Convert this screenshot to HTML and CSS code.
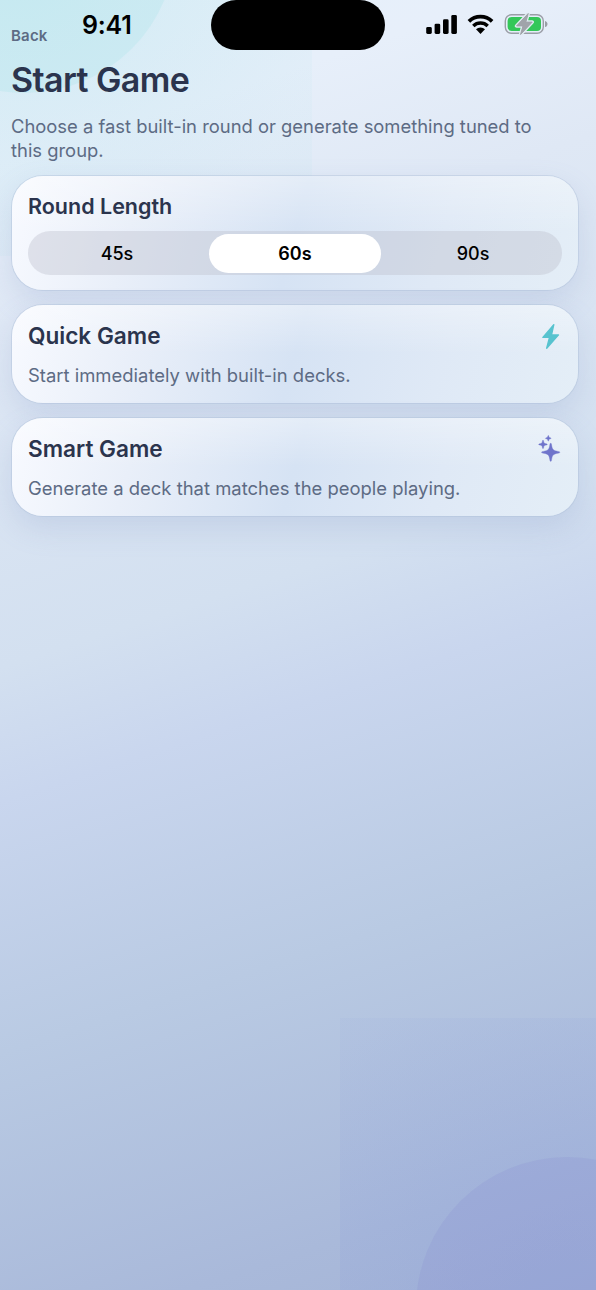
FILE: index.html
```html
<!DOCTYPE html>
<html lang="en">
<head>
    <meta charset="UTF-8">
    <meta name="viewport" content="width=device-width, initial-scale=1.0">
    <title>Start Game</title>
    <link rel="stylesheet" href="styles.css">
</head>
<body>
    <div class="screen">
        <!-- background shapes -->
        <div class="glow glow_top"></div>
        <div class="glow glow_bottom"></div>
        <div class="orb orb_top"></div>
        <div class="orb orb_bottom"></div>

        <!-- status bar, floats over the page header -->
        <div class="status_bar">
            <span class="clock">9:41</span>
            <div class="island"></div>
            <div class="status_icons">
                <svg class="signal" width="31" height="20" viewBox="0 0 31 20">
                    <rect x="0.2" y="13" width="5.6" height="7" rx="1.4"/>
                    <rect x="8.6" y="9.7" width="5.6" height="10.3" rx="1.4"/>
                    <rect x="17" y="5.3" width="5.6" height="14.7" rx="1.4"/>
                    <rect x="25.3" y="1" width="5.6" height="19" rx="1.4"/>
                </svg>
                <svg class="wifi" width="27" height="20" viewBox="0 0 27 20">
                    <path d="M1.9 7.4a16.6 16.6 0 0 1 23.2 0" fill="none" stroke="#000" stroke-width="3.7"/>
                    <path d="M6.3 12a10.4 10.4 0 0 1 14.4 0" fill="none" stroke="#000" stroke-width="3.5"/>
                    <path d="M9 15.3a6.6 6.6 0 0 1 9 0L13.5 20z"/>
                </svg>
                <svg class="battery" width="44" height="22" viewBox="0 0 44 22">
                    <rect x="1.3" y="1.8" width="38" height="18.4" rx="6.2" fill="none" stroke="#9a9ea6" stroke-width="1.4"/>
                    <path d="M41 7.9c1.6.4 2.5 1.6 2.500 3.100s-.9 2.700-2.500 3.100z" fill="#9a9ea6"/>
                    <rect x="3.6" y="4.1" width="33.4" height="13.8" rx="4" fill="#34c759"/>
                    <path d="M24.200.6L12.600 12.900h6.400L16.600 21.400 28.200 9.100h-6.400z" fill="#a0a4aa" stroke="#dfeaf0" stroke-width="3.600" stroke-linejoin="round" paint-order="stroke"/>
                    <path d="M24.200.6L12.600 12.900h6.400L16.600 21.400 28.200 9.100h-6.400z" fill="#a0a4aa" stroke="#a0a4aa" stroke-width="1" stroke-linejoin="round"/>
                </svg>
            </div>
        </div>

        <div class="content">
            <a class="back">Back</a>
            <h1 class="title">Start Game</h1>
            <p class="subtitle">Choose a fast built-in round or generate something tuned to this group.</p>

            <div class="cards">
                <div class="card">
                    <h2 class="round_title">Round Length</h2>
                    <div class="segments">
                        <span class="segment">45s</span>
                        <span class="segment active">60s</span>
                        <span class="segment">90s</span>
                    </div>
                </div>

                <div class="card">
                    <div class="card_head">
                        <h2 class="card_title">Quick Game</h2>
                        <svg class="card_icon" width="24" height="28" viewBox="0 0 24 28">
                            <path d="M15.800 2.600L4.900 15.400h6.600L8.700 26.200 20.500 12.900h-7z" fill="#57c3cf" stroke="#57c3cf" stroke-width="1.400" stroke-linejoin="round"/>
                        </svg>
                    </div>
                    <p class="card_text">Start immediately with built-in decks.</p>
                </div>

                <div class="card">
                    <div class="card_head">
                        <h2 class="card_title">Smart Game</h2>
                        <svg class="card_icon" width="24" height="28" viewBox="0 0 24 28">
                            <g fill="#6f74cb" stroke="#6f74cb" stroke-width=".4">
                                <path d="M12.7 8.3c.6 0 .7.5.9 1.8.7 4.6 1.6 5.5 6.4 6.3 1.2.2 1.8.3 1.8.9s-.6.7-1.8.9c-4.8.8-5.7 1.7-6.4 6.3-.2 1.3-.3 1.8-.9 1.8s-.7-.5-.9-1.800c-.7-4.600-1.600-5.500-6.400-6.300-1.200-.2-1.800-.3-1.800-.9s.6-.7 1.800-.9c4.800-.8 5.700-1.700 6.400-6.300.2-1.300.3-1.800.9-1.800z"/>
                                <path d="M5 5.200c.5 0 .5.500.6 1.100.3 1.900.7 2.200 2.600 2.500.7.1 1.100.2 1.100.6s-.4.500-1.100.6c-1.900.3-2.300.6-2.600 2.500-.1.600-.1 1.100-.6 1.100s-.5-.500-.6-1.100c-.3-1.900-.7-2.200-2.600-2.500-.7-.1-1.100-.2-1.100-.6s.4-.5 1.100-.6c1.900-.3 2.300-.6 2.600-2.500.1-.6.1-1.100.6-1.100z"/>
                                <path d="M10.300.5c.3 0 .4.300.5.800.2 1.100.4 1.300 1.500 1.500.5.100.8.200.8.500s-.3.400-.8.500c-1.100.2-1.300.4-1.500 1.500-.1.500-.2.800-.5.800s-.4-.3-.5-.8c-.2-1.100-.4-1.300-1.500-1.500-.5-.1-.8-.2-.8-.5s.3-.4.800-.5c1.100-.2 1.300-.4 1.500-1.500.1-.5.200-.8.500-.8z"/>
                            </g>
                        </svg>
                    </div>
                    <p class="card_text">Generate a deck that matches the people playing.</p>
                </div>
            </div>
        </div>
    </div>
</body>
</html>
```
FILE: styles.css
```css
*{margin:0;padding:0;box-sizing:border-box;}
html,body{width:100%;height:100%;}
body{font-family:Inter,"Liberation Sans",sans-serif;color:#2b344d;}

.screen{
    position:relative;
    width:100%;height:1290px;
    overflow:hidden;
    background:linear-gradient(162deg,#e6f1fa 0%,#e7effa 11%,#dfe8f5 22%,#d3e0f0 45%,#c9d6ee 54%,#b9cae3 71%,#a9b9da 91%,#a4b4d6 100%);
}

/* soft shapes behind the content */
.glow,.orb{position:absolute;}
.glow_top{top:0;left:0;width:312px;height:256px;background:radial-gradient(circle at 25px -58px,rgba(125,215,220,.2),rgba(125,215,220,.05) 320px);}
.glow_bottom{right:0;bottom:0;width:256px;height:272px;background:radial-gradient(circle at 227px 290px,rgba(124,145,218,.24),rgba(124,145,218,.06) 340px);}
.orb{width:302px;height:302px;border-radius:50%;}
.orb_top{left:-126px;top:-209px;background:rgba(130,220,220,.15);}
.orb_bottom{left:416px;top:1157px;background:rgba(135,142,210,.22);}

/* status bar */
.status_bar{position:absolute;top:0;left:0;width:100%;height:50px;}
.clock{position:absolute;left:82px;top:9px;font-size:25px;line-height:32px;font-weight:600;color:#000;letter-spacing:-.2px;}
.island{width:174px;height:50px;margin-left:211px;border-radius:25px;background:#000;}
.status_icons{position:absolute;left:426px;top:13px;display:flex;align-items:center;}
.wifi{margin-left:10px;}
.battery{margin-left:10px;}

/* page content */
.content{position:relative;padding:27px 18px 0 11px;}
.back{display:block;font-size:15px;line-height:18px;font-weight:600;color:#5d6b84;letter-spacing:.2px;}
.title{margin-top:14px;font-size:34px;line-height:42px;font-weight:600;letter-spacing:-.6px;}
.subtitle{margin-top:13px;padding-right:30px;font-size:18.4px;line-height:24px;color:#5d6b84;}

.cards{display:flex;flex-direction:column;gap:15px;margin-top:14px;padding-left:1px;}
.card{
    padding:16px 16px 15px;
    border-radius:31px;
    background:
        linear-gradient(180deg,rgba(255,255,255,.35),rgba(255,255,255,0) 50%),
        linear-gradient(105deg,#f8faff 0%,#e9eff9 22%,#d6e3f4 50%,#dfe9f6 75%,#e4eef7 100%);
    box-shadow:0 0 0 1px rgba(175,192,218,.45),0 12px 30px rgba(120,140,190,.2);
}
.round_title{font-size:21.5px;line-height:28px;font-weight:600;}
.card_head{display:flex;justify-content:space-between;align-items:center;height:30px;}
.card_title{font-size:22.6px;line-height:30px;font-weight:600;}
.card_text{margin-top:12px;padding-bottom:1px;font-size:18.45px;line-height:24px;color:#5d6b84;}

/* segmented control */
.segments{display:flex;margin-top:11px;padding:2.5px 0;height:44px;border-radius:22px;background:rgba(190,192,204,.4);}
.segment{flex:1;margin:0 3px;border-radius:19.5px;text-align:center;font-size:18px;line-height:39px;font-weight:500;color:#000;}
.segment.active{background:#fff;font-weight:600;}
```
